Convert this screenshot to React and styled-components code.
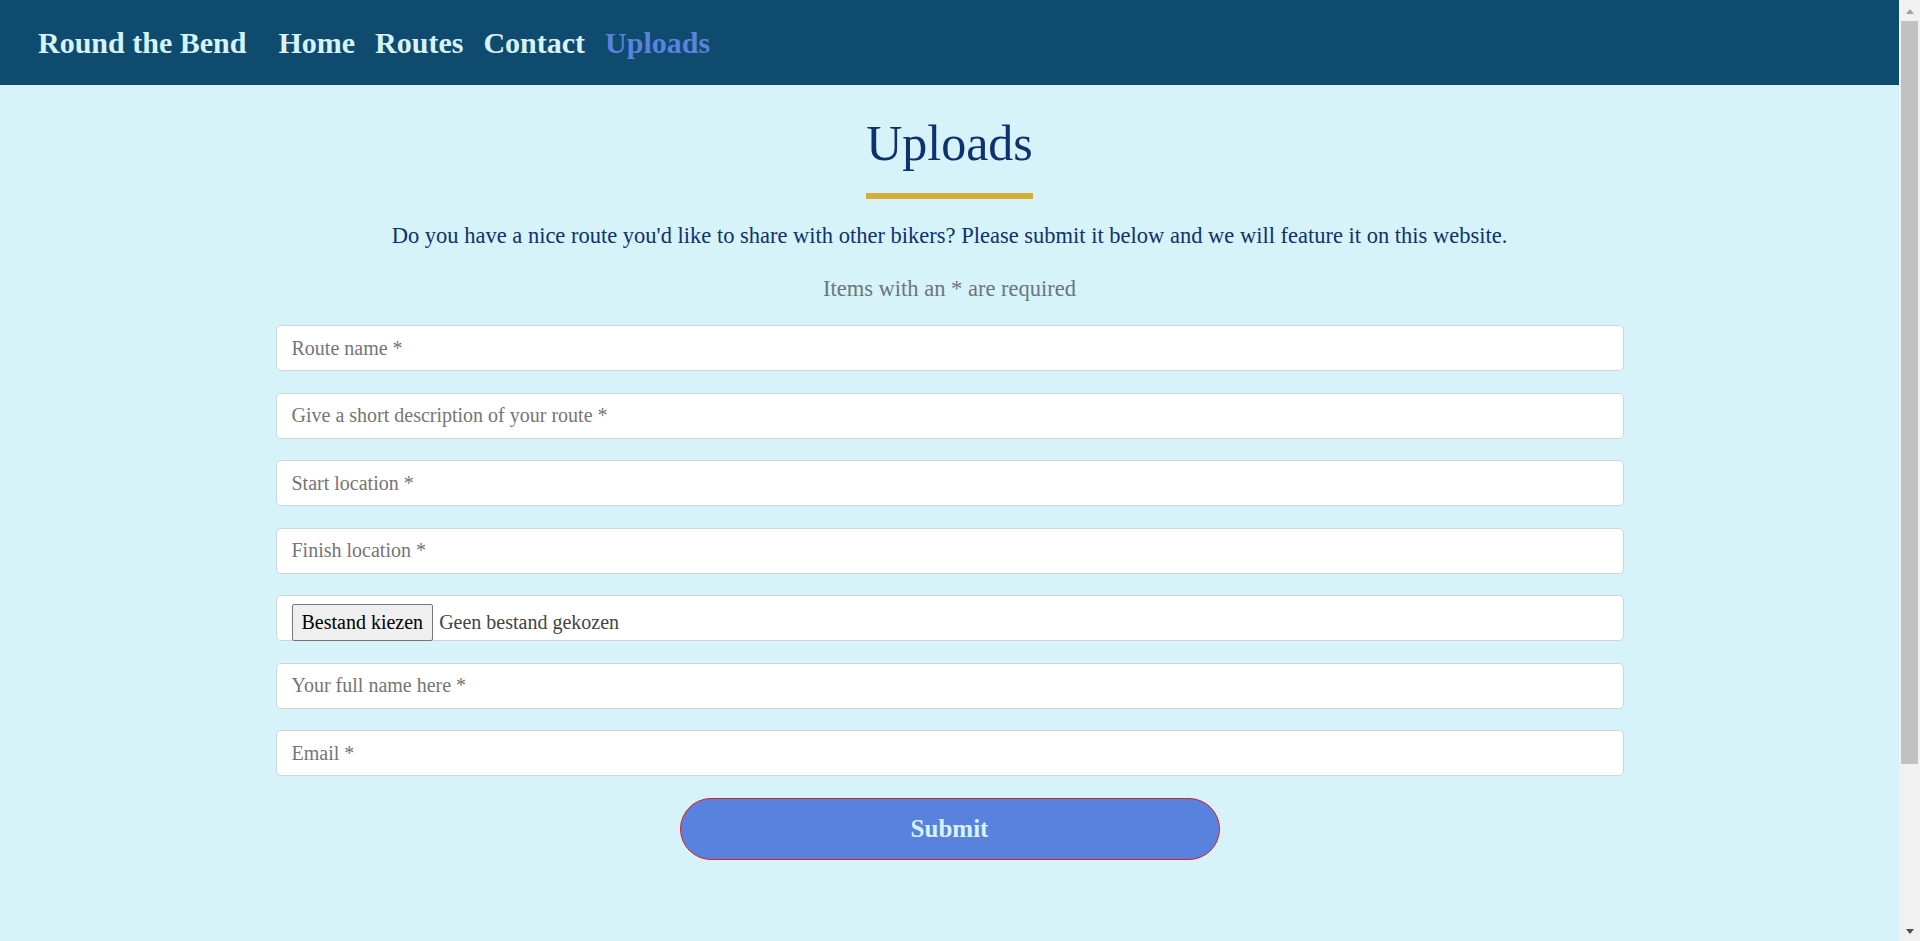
import styled, { createGlobalStyle } from 'styled-components';

const GlobalStyle = createGlobalStyle`
  html, body {
    padding: 0;
    background-color: #d6f3f9;
  }

  html {
    margin: 0;
  }

  body {
    margin: 0 21px 0 0;
    font-family: 'Liberation Serif', 'Times New Roman', serif;
  }

  * {
    box-sizing: border-box;
  }
`;

const fields = [
  'Route name *',
  'Give a short description of your route *',
  'Start location *',
  'Finish location *',
  null,
  'Your full name here *',
  'Email *',
];

function App() {
  return (
    <>
      <GlobalStyle />
      <Nav>
        <Brand href="#">Round the Bend</Brand>
        <NavLinks>
          <NavLink href="#">Home</NavLink>
          <NavLink href="#">Routes</NavLink>
          <NavLink href="#">Contact</NavLink>
          <NavLink href="#" $active>
            Uploads
          </NavLink>
        </NavLinks>
      </Nav>
      <Main>
        <Title>Uploads</Title>
        <Intro>
          Do you have a nice route you'd like to share with other bikers? Please
          submit it below and we will feature it on this website.
        </Intro>
        <Required>Items with an * are required</Required>
        <Form onSubmit={e => e.preventDefault()}>
          {fields.map((placeholder, i) =>
            placeholder ? (
              <Input key={i} type="text" placeholder={placeholder} />
            ) : (
              <FileBox key={i}>
                <FileButton type="button">Bestand kiezen</FileButton>
                <FileName>Geen bestand gekozen</FileName>
              </FileBox>
            )
          )}
          <SubmitButton type="submit">Submit</SubmitButton>
        </Form>
      </Main>
      <ScrollBar aria-hidden="true">
        <ArrowZone>
          <Arrow $dir="up" />
        </ArrowZone>
        <Thumb />
        <ArrowZone>
          <Arrow $dir="down" />
        </ArrowZone>
      </ScrollBar>
    </>
  );
}

export default App;

const Nav = styled.nav`
  display: flex;
  align-items: center;
  height: 85px;
  padding: 0 38px;
  background-color: #0f4a6f;
`;

const Brand = styled.a`
  margin-right: 32px;
  color: #d6f3f9;
  font-size: 30px;
  font-weight: 700;
  text-decoration: none;
`;

const NavLinks = styled.div`
  display: flex;
  gap: 20px;
`;

const NavLink = styled.a`
  color: ${({ $active }) => ($active ? '#5a83de' : '#d6f3f9')};
  font-size: 30px;
  font-weight: 700;
  text-decoration: none;
`;

const Main = styled.main`
  display: flex;
  flex-direction: column;
  align-items: center;
  padding: 30px 0 291px;
`;

const Title = styled.h1`
  margin: 0;
  padding-bottom: 22px;
  border-bottom: 6px solid #d4af37;
  color: #0e3170;
  font-size: 50px;
  font-weight: 400;
  line-height: 56px;
`;

const Intro = styled.p`
  margin: 22px 0 0;
  color: #0e3170;
  font-size: 22.5px;
  line-height: 30px;
  text-align: center;
`;

const Required = styled.p`
  margin: 23px 0 0;
  color: #6c757d;
  font-size: 22.5px;
  line-height: 30px;
`;

const Form = styled.form`
  display: flex;
  flex-direction: column;
  align-items: center;
  gap: 21.5px;
  width: 1348px;
  margin-top: 21px;
`;

const Input = styled.input`
  width: 100%;
  height: 46px;
  padding: 0 15px;
  border: 1px solid #ced4da;
  border-radius: 5px;
  background-color: #fff;
  color: #495057;
  font-family: 'Liberation Serif', 'Times New Roman', serif;
  font-size: 20px;
  outline: none;

  ::placeholder {
    color: #6c757d;
  }
`;

const FileBox = styled.div`
  display: flex;
  align-items: flex-start;
  width: 100%;
  height: 46px;
  padding: 8px 15px 0;
  border: 1px solid #ced4da;
  border-radius: 5px;
  background-color: #fff;
`;

const FileButton = styled.button`
  height: 37px;
  padding: 0 9px;
  border: 1px solid #767676;
  border-radius: 2px;
  background-color: #efefef;
  color: #000;
  font-family: 'Liberation Serif', 'Times New Roman', serif;
  font-size: 20px;
`;

const FileName = styled.span`
  margin-left: 6px;
  color: #444;
  font-size: 20px;
  line-height: 37px;
`;

const SubmitButton = styled.button`
  width: 540px;
  height: 62px;
  border: 1px solid #e0201c;
  border-radius: 31px;
  background-color: #5882de;
  color: #d6f3f9;
  font-family: 'Liberation Serif', 'Times New Roman', serif;
  font-size: 25px;
  font-weight: 700;
  cursor: pointer;
`;

const ScrollBar = styled.div`
  display: flex;
  flex-direction: column;
  position: fixed;
  top: 0;
  right: 0;
  width: 21px;
  height: 100vh;
  background-color: #f1f1f1;
`;

const ArrowZone = styled.div`
  display: flex;
  align-items: center;
  justify-content: center;
  height: 21px;

  &:last-child {
    margin-top: auto;
  }
`;

const Arrow = styled.span`
  width: 0;
  height: 0;
  border-left: 4.5px solid transparent;
  border-right: 4.5px solid transparent;
  ${({ $dir }) =>
    $dir === 'up'
      ? 'border-bottom: 5px solid #a3a3a3; margin-top: 2px;'
      : 'border-top: 5px solid #505050; margin-top: 1px;'}
`;

const Thumb = styled.div`
  height: 743px;
  margin: 0 2px;
  background-color: #c1c1c1;
`;
